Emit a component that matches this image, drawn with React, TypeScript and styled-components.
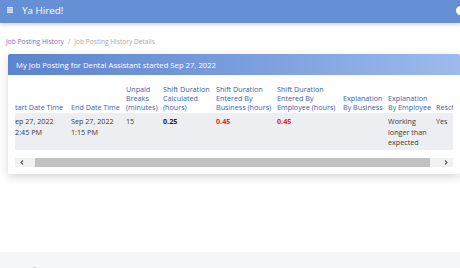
import React, { useEffect, useRef, useState } from "react";
import styled, { createGlobalStyle } from "styled-components";

const GlobalStyle = createGlobalStyle`
  html, body { margin: 0; padding: 0; background: #ffffff; overflow: hidden; }
  body { font-family: "Open Sans", "Noto Sans", Arial, sans-serif; color: #333; }
`;

const Page = styled.div`
  height: 268px;
  display: flex;
  flex-direction: column;
  overflow: hidden;
`;

const TopBar = styled.header`
  height: 23px;
  box-sizing: border-box;
  flex: none;
  display: flex;
  align-items: center;
  padding: 0 0 3px 7px;
  background: #6690d5;
  box-shadow: 0 2px 4px rgba(0, 0, 0, 0.16);
  position: relative;
  z-index: 1;
`;

const Brand = styled.span`
  margin-left: 9px;
  color: #ffffff;
  font-size: 9.8px;
  flex: 1;
`;

const Avatar = styled.span`
  width: 9px;
  height: 9px;
  border-radius: 50%;
  background: #ffffff;
  margin-right: -5px;
`;

const Main = styled.main`
  flex: 1;
  padding-top: 14px;
`;

const Crumbs = styled.nav`
  display: flex;
  align-items: center;
  gap: 4px;
  padding-left: 6px;
  font-size: 6.6px;
  line-height: 9px;
  color: #a9a9a9;
`;

const CrumbLink = styled.span`
  color: #7d6fbf;
`;

const Card = styled.section`
  margin: 8px 0 0 8px;
  background: #fff;
  border-radius: 2px;
  box-shadow: 0 3px 8px rgba(0, 0, 0, 0.16);
`;

const CardHead = styled.div`
  height: 21px;
  display: flex;
  align-items: center;
  padding-left: 8px;
  border-radius: 2px 2px 0 0;
  background: linear-gradient(90deg, #5b84cf 0%, #7c9fdd 55%, #9cbaec 100%);
  color: #fff;
  font-size: 7.7px;
`;

const CardBody = styled.div`
  padding: 10px 7px 7px 7px;
`;

const Scroller = styled.div`
  overflow-x: auto;
  overflow-y: hidden;
  scrollbar-width: none;
  &::-webkit-scrollbar { display: none; }
`;

const Table = styled.table`
  table-layout: fixed;
  border-collapse: collapse;
  width: 455px;
  margin-bottom: 8px;
  font-size: 7.2px;
`;

const Th = styled.th`
  text-align: left;
  vertical-align: bottom;
  font-weight: normal;
  color: #3b60ab;
  line-height: 8.8px;
  padding: 0 0 2px 3px;
  white-space: nowrap;
  overflow: hidden;
`;

const Row = styled.tr`
  background: #edeef1;
`;

const Td = styled.td<{ $tone?: "bold" | "red" }>`
  vertical-align: top;
  padding: 3px 0 2px 3px;
  line-height: 10.5px;
  color: ${(p) => (p.$tone === "red" ? "#ee1c25" : p.$tone === "bold" ? "#222" : "#3a3a3a")};
  font-weight: ${(p) => (p.$tone ? 700 : 400)};
  white-space: nowrap;
  overflow: hidden;
`;

const ScrollBar = styled.div`
  display: flex;
  height: 9px;
  background: #f1f1f1;
`;

const ScrollButton = styled.span`
  width: 14px;
  flex: none;
  display: flex;
  align-items: center;
  justify-content: center;
`;

const ScrollTrack = styled.div`
  flex: 1;
  position: relative;
`;

const ScrollThumb = styled.div`
  position: absolute;
  top: 0;
  bottom: 0;
  background: #c1c1c1;
`;

const Footer = styled.footer`
  flex: none;
  height: 16px;
  background: #f6f7f9;
  display: flex;
  justify-content: space-between;
  padding: 14px 4px 0 0;
  box-sizing: border-box;
  font-size: 6.6px;
  color: #9a9a9a;
  overflow: hidden;
`;

const FooterLinks = styled.span`
  color: #8c82c8;
`;

const columns: { w: number; lines: string[] }[] = [
  { w: 60, lines: ["Start Date Time"] },
  { w: 55, lines: ["End Date Time"] },
  { w: 37, lines: ["Unpaid", "Breaks", "(minutes)"] },
  { w: 53, lines: ["Shift Duration", "Calculated", "(hours)"] },
  { w: 61, lines: ["Shift Duration", "Entered By", "Business (hours)"] },
  { w: 66, lines: ["Shift Duration", "Entered By", "Employee (hours)"] },
  { w: 45, lines: ["Explanation", "By Business"] },
  { w: 48, lines: ["Explanation", "By Employee"] },
  { w: 30, lines: ["Rescheduled"] },
];

const Lines = ({ lines }: { lines: string[] }) => (
  <>
    {lines.map((l, i) => (
      <React.Fragment key={i}>
        {i > 0 && <br />}
        {l}
      </React.Fragment>
    ))}
  </>
);

const MenuIcon = () => (
  <svg width="6" height="6" viewBox="0 0 6 6">
    <rect x="0" y="0" width="6" height="1.6" fill="#dfe7f6" />
    <rect x="0" y="2.2" width="6" height="1.6" fill="#dfe7f6" />
    <rect x="0" y="4.4" width="6" height="1.6" fill="#dfe7f6" />
  </svg>
);

const Chevron = ({ dir }: { dir: "left" | "right" }) => (
  <svg width="4" height="5" viewBox="0 0 4 5">
    <path
      d={dir === "left" ? "M3 0.5 L1 2.5 L3 4.5" : "M1 0.5 L3 2.5 L1 4.5"}
      fill="none"
      stroke="#555"
      strokeWidth="1.1"
    />
  </svg>
);

export default function App() {
  const scrollRef = useRef<HTMLDivElement>(null);
  const [thumb, setThumb] = useState({ left: 0, width: 100 });

  useEffect(() => {
    const el = scrollRef.current;
    if (!el) return;
    el.scrollLeft = 7;
    const update = () => {
      setThumb({
        left: (el.scrollLeft / el.scrollWidth) * 100,
        width: (el.clientWidth / el.scrollWidth) * 100,
      });
    };
    update();
    el.addEventListener("scroll", update);
    return () => el.removeEventListener("scroll", update);
  }, []);

  return (
    <>
      <GlobalStyle />
      <Page>
        <TopBar>
          <MenuIcon />
          <Brand>Ya Hired!</Brand>
          <Avatar />
        </TopBar>
        <Main>
          <Crumbs>
            <CrumbLink>Job Posting History</CrumbLink>
            <span>/</span>
            <span>Job Posting History Details</span>
          </Crumbs>
          <Card>
            <CardHead>My Job Posting for Dental Assistant started Sep 27, 2022</CardHead>
            <CardBody>
              <Scroller ref={scrollRef}>
                <Table>
                  <colgroup>
                    {columns.map((c, i) => (
                      <col key={i} style={{ width: c.w }} />
                    ))}
                  </colgroup>
                  <thead>
                    <tr>
                      {columns.map((c, i) => (
                        <Th key={i}>
                          <Lines lines={c.lines} />
                        </Th>
                      ))}
                    </tr>
                  </thead>
                  <tbody>
                    <Row>
                      <Td>
                        <Lines lines={["Sep 27, 2022", "12:45 PM"]} />
                      </Td>
                      <Td>
                        <Lines lines={["Sep 27, 2022", "1:15 PM"]} />
                      </Td>
                      <Td>15</Td>
                      <Td $tone="bold">0.25</Td>
                      <Td $tone="red">0.45</Td>
                      <Td $tone="red">0.45</Td>
                      <Td></Td>
                      <Td>
                        <Lines lines={["Working", "longer than", "expected"]} />
                      </Td>
                      <Td>Yes</Td>
                    </Row>
                  </tbody>
                </Table>
              </Scroller>
              <ScrollBar>
                <ScrollButton>
                  <Chevron dir="left" />
                </ScrollButton>
                <ScrollTrack>
                  <ScrollThumb style={{ left: `${thumb.left}%`, width: `${thumb.width}%` }} />
                </ScrollTrack>
                <ScrollButton>
                  <Chevron dir="right" />
                </ScrollButton>
              </ScrollBar>
            </CardBody>
          </Card>
        </Main>
        <Footer>
          <span>Copyright © Ya Hired 2022</span>
          <FooterLinks>Privacy Policy · Terms of Service</FooterLinks>
        </Footer>
      </Page>
    </>
  );
}
